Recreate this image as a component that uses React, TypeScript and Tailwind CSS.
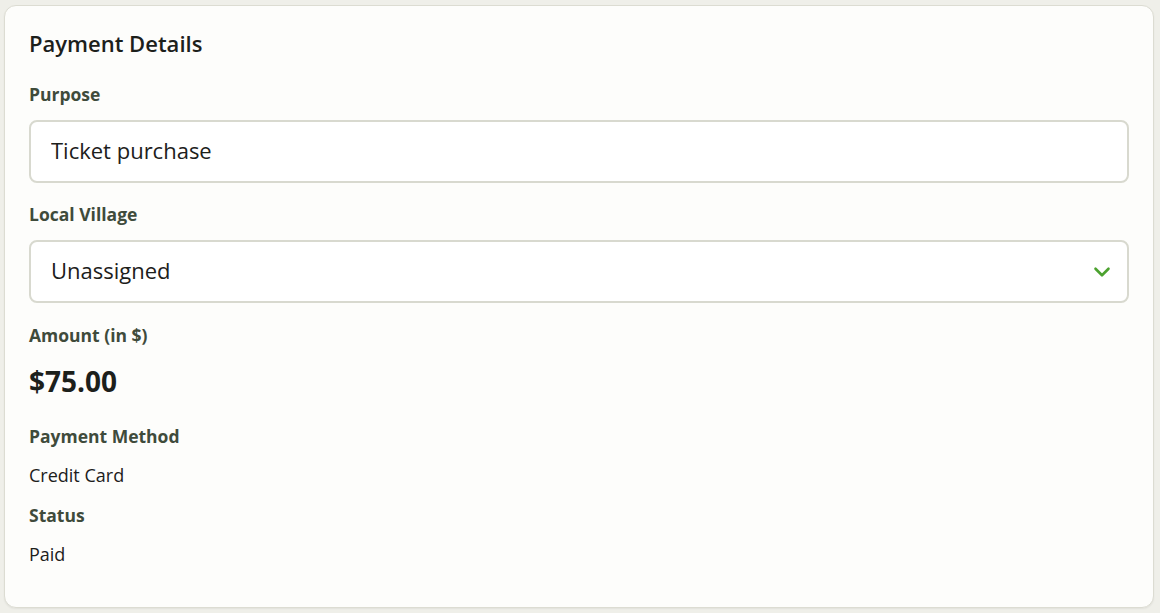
import React from 'react';
import { ChevronDown } from 'lucide-react';

function Label({ children, className = '' }: { children: React.ReactNode; className?: string }) {
  return <div className={`text-[17.5px] leading-6 font-bold text-[#3f4b3b] ${className}`}>{children}</div>;
}

export default function App() {
  const [purpose, setPurpose] = React.useState('Ticket purchase');
  const [village, setVillage] = React.useState('Unassigned');

  return (
    <div className="min-h-screen bg-[#efefe9] pl-[4px] pr-[6px] pt-[5px] font-['Open_Sans',sans-serif] text-[#1c201b]">
      <div className="rounded-[12px] border border-[#dcdcd2] bg-[#fdfdfb] px-6 pt-[23px] pb-[41px] shadow-[0_1px_2px_rgba(0,0,0,0.06)]">
        <h2 className="text-[22px] leading-7 font-semibold text-[#1c201b]">Payment Details</h2>

        <Label className="mt-[25px]">Purpose</Label>
        <input
          value={purpose}
          onChange={(e) => setPurpose(e.target.value)}
          className="mt-[14px] block h-[63px] w-full rounded-[8px] border-2 border-[#d8d9cf] bg-white px-5 pb-[3px] text-[22px] text-[#1c201b] outline-none"
        />

        <Label className="mt-[19px]">Local Village</Label>
        <div className="relative mt-[14px]">
          <select
            value={village}
            onChange={(e) => setVillage(e.target.value)}
            className="block h-[63px] w-full appearance-none rounded-[8px] border-2 border-[#d8d9cf] bg-white px-5 pb-[2px] text-[22px] text-[#1c201b] outline-none"
          >
            <option>Unassigned</option>
          </select>
          <ChevronDown size={26} strokeWidth={2.4} className="pointer-events-none absolute right-[14px] top-1/2 -translate-y-1/2 text-[#4ca22f]" />
        </div>

        <Label className="mt-5">Amount (in $)</Label>
        <div className="mt-4 text-[28px] leading-9 font-bold">$75.00</div>

        <Label className="mt-[25px]">Payment Method</Label>
        <div className="mt-[15px] text-[18px] leading-6">Credit Card</div>

        <Label className="mt-4">Status</Label>
        <div className="mt-[15px] text-[18px] leading-6">Paid</div>
      </div>
    </div>
  );
}
